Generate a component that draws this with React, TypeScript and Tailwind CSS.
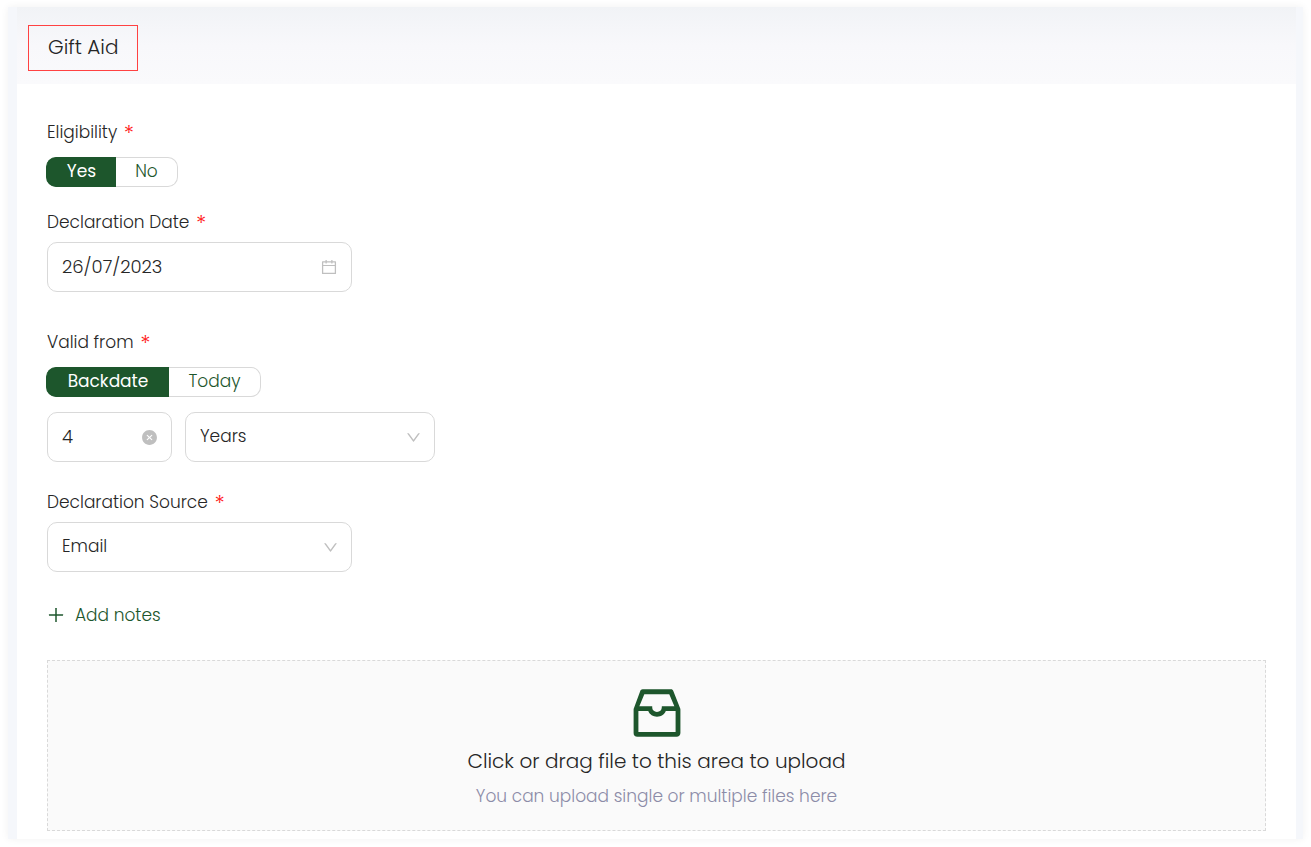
import { useState } from "react";
import type { ReactNode } from "react";
import {
  AiFillCloseCircle,
  AiOutlineCalendar,
  AiOutlineDown,
  AiOutlineInbox,
  AiOutlinePlus,
} from "react-icons/ai";

const boxStyle =
  "w-full appearance-none rounded-[10px] border border-[#d9d9d9] bg-white pl-3.5 text-[#262626] outline-none focus:border-[#1d562c]";

function Required() {
  return (
    <span className="ml-0.5 align-[-3px] text-[22px] leading-none font-light text-[#ff2020]">*</span>
  );
}

function FieldLabel({ htmlFor, children }: { htmlFor: string; children: ReactNode }) {
  return (
    <label htmlFor={htmlFor} className="block h-[30px] text-[17px] leading-[30px]">
      {children} <Required />
    </label>
  );
}

function Toggle({
  label,
  options,
  widths,
}: {
  label: string;
  options: [string, string];
  widths: [string, string];
}) {
  const [selected, setSelected] = useState(options[0]);
  return (
    <fieldset>
      <legend className="h-[30px] text-[17px] leading-[30px]">
        {label} <Required />
      </legend>
      <div className="mt-2.5 -ml-px flex h-[30px]">
        {options.map((option, i) => (
          <button
            key={option}
            type="button"
            aria-pressed={selected === option}
            onClick={() => setSelected(option)}
            className={`${widths[i]} flex items-center justify-center border pb-0.5 text-[17px] leading-[26px] ${
              i === 0 ? "rounded-l-[10px] border-r-0" : "rounded-r-[10px] border-l-0"
            } ${
              selected === option
                ? "border-[#1d562c] bg-[#1d562c] font-normal text-white"
                : "border-[#d9d9d9] bg-white text-[#1d562c]"
            }`}
          >
            {option}
          </button>
        ))}
      </div>
    </fieldset>
  );
}

function SelectBox({ id, label, options }: { id: string; label?: string; options: string[] }) {
  return (
    <div className="grid items-center">
      <select
        id={id}
        aria-label={label}
        className={`${boxStyle} col-start-1 row-start-1 h-[50px] pr-10 text-[17px]`}
      >
        {options.map((option) => (
          <option key={option}>{option}</option>
        ))}
      </select>
      <AiOutlineDown className="pointer-events-none col-start-1 row-start-1 mr-[13px] size-[17px] justify-self-end text-[#bfbfbf]" />
    </div>
  );
}

export default function App() {
  const [amount, setAmount] = useState("4");
  const [date, setDate] = useState("26/07/2023");

  return (
    <div className="bg-white px-2 pt-[7px] pb-2 font-['Poppins','Inter',sans-serif] font-light text-[#262626]">
      <div className="bg-[#f5f7fb] pr-[7px] pl-[9px] shadow-[0_0_8px_rgba(0,0,0,0.06)]">
        <main className="bg-white">
          <header className="bg-linear-to-b from-[#f1f3f6] via-[#f8f8fb] via-50% to-[#fafafc] px-[11px] pt-[18px] pb-[13px]">
            <h1 className="inline-block border border-[#ff4242] px-[19px] pb-0.5 align-top text-[20px] leading-[42px] font-light">
              Gift Aid
            </h1>
          </header>

          <form className="px-[30px] pt-[33px] pb-2" onSubmit={(e) => e.preventDefault()}>
            <Toggle label="Eligibility" options={["Yes", "No"]} widths={["w-[70px]", "w-[62px]"]} />

            <div className="mt-5 w-[305px]">
              <FieldLabel htmlFor="date">Declaration Date</FieldLabel>
              <div className="mt-[5px] grid items-center">
                <input
                  id="date"
                  value={date}
                  onChange={(e) => setDate(e.target.value)}
                  className={`${boxStyle} col-start-1 row-start-1 h-[50px] pr-10 pb-0.5 text-lg`}
                />
                <AiOutlineCalendar className="pointer-events-none col-start-1 row-start-1 mr-3.5 size-[18px] justify-self-end text-[#bfbfbf]" />
              </div>
            </div>

            <div className="mt-[35px]">
              <Toggle
                label="Valid from"
                options={["Backdate", "Today"]}
                widths={["w-[123px]", "w-[92px]"]}
              />
            </div>

            <div className="mt-[15px] flex gap-[13px]">
              <div className="grid w-[125px] items-center">
                <input
                  aria-label="Backdate amount"
                  value={amount}
                  onChange={(e) => setAmount(e.target.value)}
                  className={`${boxStyle} col-start-1 row-start-1 h-[50px] pr-10 pb-0.5 text-lg`}
                />
                <button
                  type="button"
                  aria-label="Clear"
                  onClick={() => setAmount("")}
                  className="col-start-1 row-start-1 mr-3.5 justify-self-end text-[#bfbfbf]"
                >
                  <AiFillCloseCircle className="size-[17px]" />
                </button>
              </div>
              <div className="w-[250px]">
                <SelectBox id="unit" label="Backdate unit" options={["Years", "Months", "Days"]} />
              </div>
            </div>

            <div className="mt-[25px] w-[305px]">
              <FieldLabel htmlFor="source">Declaration Source</FieldLabel>
              <div className="mt-[5px]">
                <SelectBox id="source" options={["Email", "Phone", "Post"]} />
              </div>
            </div>

            <button
              type="button"
              className="mt-7 -ml-px flex items-center gap-[9px] text-[17px] leading-[30px] text-[#1d562c]"
            >
              <AiOutlinePlus className="size-5" />
              Add notes
            </button>

            <label className="mt-[30px] flex cursor-pointer flex-col items-center border border-dashed border-[#d9d9d9] bg-[#fafafa] pt-5 pb-[19px] text-center">
              <input type="file" multiple className="sr-only" />
              <AiOutlineInbox className="size-16 text-[#1d562c]" />
              <span className="mt-px text-[20px] leading-[30px]">
                Click or drag file to this area to upload
              </span>
              <span className="mt-[5px] text-[17px] leading-[30px] text-[#8c8ca8]">
                You can upload single or multiple files here
              </span>
            </label>
          </form>
        </main>
      </div>
    </div>
  );
}
